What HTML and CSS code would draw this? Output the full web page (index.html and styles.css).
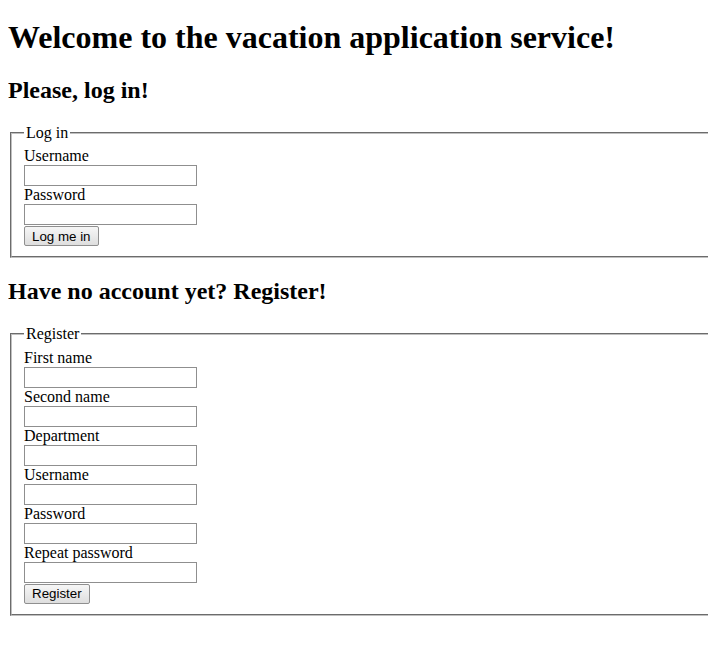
FILE: index.html
```html
<!DOCTYPE html>
<html>
<head>
<meta charset="utf-8">
<title>Vacation application service</title>
<link rel="stylesheet" href="styles.css">
</head>
<body>
<h1 class="title">Welcome to the vacation application service!</h1>
<h2 class="subtitle">Please, log in!</h2>
<form class="form">
<fieldset class="box">
<legend class="legend">Log in</legend>
<label class="lbl">Username</label>
<input class="field" type="text">
<label class="lbl">Password</label>
<input class="field" type="password">
<button class="btn" type="button">Log me in</button>
</fieldset>
</form>
<h2 class="subtitle">Have no account yet? Register!</h2>
<form class="form">
<fieldset class="box">
<legend class="legend">Register</legend>
<label class="lbl">First name</label>
<input class="field" type="text">
<label class="lbl">Second name</label>
<input class="field" type="text">
<label class="lbl">Department</label>
<input class="field" type="text">
<label class="lbl">Username</label>
<input class="field" type="text">
<label class="lbl">Password</label>
<input class="field" type="password">
<label class="lbl">Repeat password</label>
<input class="field" type="password">
<button class="btn" type="button">Register</button>
</fieldset>
</form>
</body>
</html>
```
FILE: styles.css
```css
body {
  margin: 8px 0 8px 8px;
  font-family: "Liberation Serif", "Times New Roman", serif;
  font-size: 16px;
  color: #000;
  background: #fff;
}
.title {
  font-size: 32px;
  margin: 11px 0 21px;
}
.subtitle {
  font-size: 24px;
  margin: 19.9px 0;
}
.form {
  margin: 0;
}
.box {
  margin: 0 0 0 2px;
  padding: 0.35em 0.75em 0.625em;
  border: 2px groove #c0c0c0;
  border-right: none;
}
.legend {
  padding: 0 2px;
}
.lbl {
  display: block;
}
.field {
  display: block;
  margin: 0;
  width: 173px;
  height: 21px;
  box-sizing: border-box;
  border: 1px solid #8f8f8f;
  padding: 1px 2px;
  font-family: "Liberation Sans", Arial, sans-serif;
  font-size: 13.33px;
}
.btn {
  display: block;
  margin: 1px 0 0;
  height: 20px;
  padding: 1px 7px;
  font-family: "Liberation Sans", Arial, sans-serif;
  font-size: 13.33px;
  border: 1px solid #8f8f8f;
  border-radius: 2px;
  background: linear-gradient(#f6f6f6, #dedede);
  color: #000;
}
```
